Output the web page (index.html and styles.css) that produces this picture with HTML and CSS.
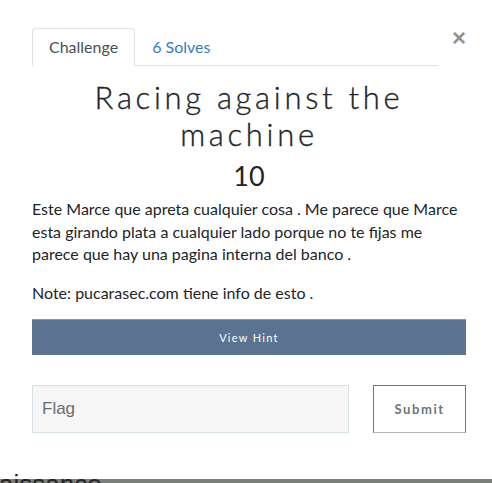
FILE: index.html
```html
<!DOCTYPE html>
<html>
<head>
<meta charset="utf-8">
<link rel="stylesheet" href="styles.css">
</head>
<body>
<div class="modal">
  <div class="header">
    <ul class="tabs">
      <li class="tab active">Challenge</li>
      <li class="tab link">6 Solves</li>
    </ul>
    <span class="close">&times;</span>
  </div>
  <h2 class="title">Racing against the machine</h2>
  <h3 class="value">10</h3>
  <p class="desc">Este Marce que apreta cualquier cosa . Me parece que Marce esta girando plata a cualquier lado porque no te fijas me parece que hay una pagina interna del banco .</p>
  <p class="desc note">Note: pucarasec.com tiene info de esto .</p>
  <button class="hint">View Hint</button>
  <div class="submit-row">
    <input class="flag" placeholder="Flag">
    <button class="submit">Submit</button>
  </div>
</div>
<div class="backdrop"><span class="bg-text">aissance</span></div>
</body>
</html>
```
FILE: styles.css
```css
html, body { margin: 0; padding: 0; background: #fff; }
body { font-family: Lato, "Open Sans", sans-serif; color: #212529; width: 492px; height: 483px; overflow: hidden; position: relative; }
.modal { padding: 28px 26px 0 32px; height: 451px; background: #fff; }
.header { display: flex; align-items: flex-start; }
.tabs { list-style: none; margin: 0; padding: 0; display: flex; flex: 1; border-bottom: 1px solid #dee2e6; margin-right: 14px; }
.tab { font-size: 16px; line-height: 36px; padding: 0 16px; border: 1px solid transparent; border-radius: 4px 4px 0 0; margin-bottom: -1px; }
.tab.active { color: #495057; border-color: #dee2e6 #dee2e6 #fff; background: #fff; }
.tab.link { color: #3a7cc0; }
.close { font-size: 24px; line-height: 20px; color: #808080; font-weight: 700; font-family: "Liberation Sans", Arial, sans-serif; opacity: .85; }
.title { font-family: Lato, sans-serif; font-weight: 300; font-size: 31px; line-height: 37px; letter-spacing: 3.7px; text-align: center; margin: 13px 20px 0; color: #212529; -webkit-text-stroke: 0.35px #212529; }
.value { font-weight: 400; font-size: 27px; line-height: 32px; text-align: center; margin: 7px 0 6px; color: #212529; }
.desc { font-size: 16px; line-height: 22.5px; margin: 0 0 16px; color: #212529; }
.desc.note { margin-bottom: 15px; }
.hint { display: block; width: 100%; height: 36px; background: #5b7290; border: 0; border-top: 1px solid #8797ab; color: #fff; font-family: Lato, sans-serif; font-size: 11px; letter-spacing: 1.3px; margin: 0; padding: 0; }
.submit-row { display: flex; gap: 24px; margin-top: 30px; }
.flag { box-sizing: border-box; width: 318px; height: 48px; background: #f6f6f6; border: 1px solid #d6e0e7; padding: 0 9px; font-family: "Liberation Sans", Arial, sans-serif; font-size: 17px; color: #333; outline: none; }
.flag::placeholder { color: #6c6c6c; }
.submit { box-sizing: border-box; width: 93px; height: 48px; background: #fff; border: 1px solid #6f7a80; border-bottom-color: #b0b6ba; color: #6c757d; font-family: Lato, sans-serif; font-weight: 700; font-size: 13px; letter-spacing: 1.6px; padding: 0; }
.backdrop { position: absolute; left: 0; right: 0; top: 479px; height: 4px; background: #7b7e7b; }
.bg-text { position: absolute; left: -1px; top: -10px; font-family: "Liberation Sans", Arial, sans-serif; font-size: 26px; line-height: 30px; color: #222; }
```
